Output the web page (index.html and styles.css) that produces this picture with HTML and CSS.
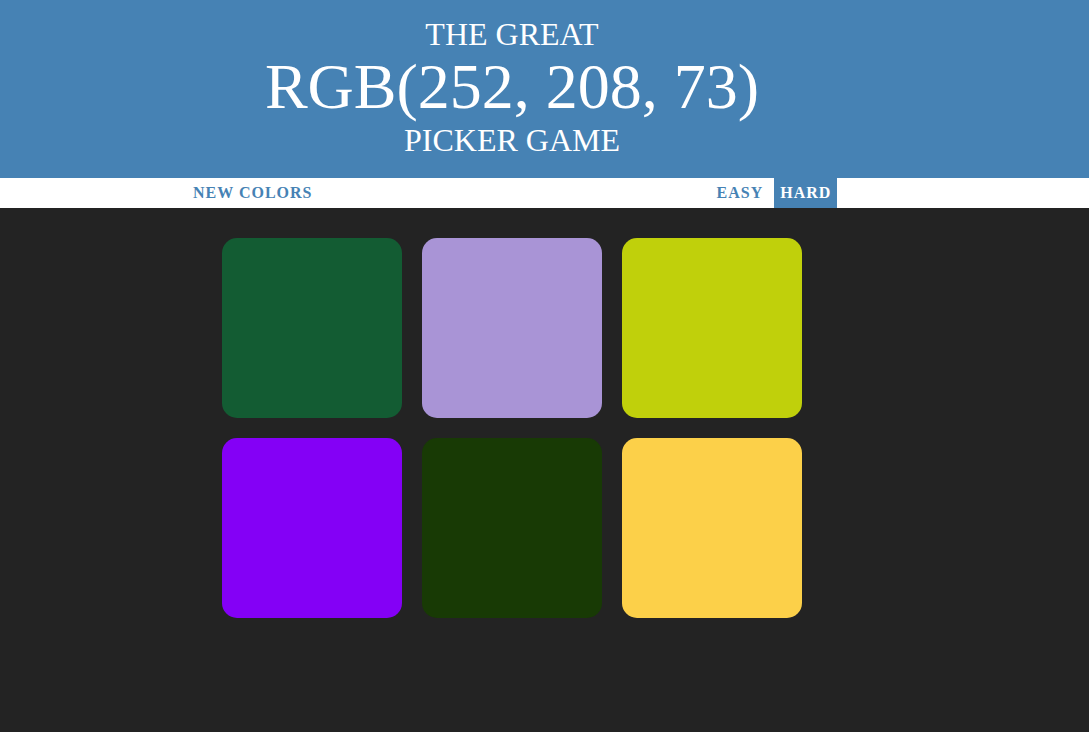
FILE: index.html
```html
<!DOCTYPE html>
<html>
<head>
<meta charset="utf-8">
<title>Color Game</title>
<link rel="stylesheet" href="styles.css">
</head>
<body>
<header class="header">
  <h1 class="title">
    THE GREAT
    <span class="rgb">RGB(252, 208, 73)</span>
    PICKER GAME
  </h1>
</header>
<nav class="stripe">
  <div class="stripe-inner">
    <button class="btn btn-new">NEW COLORS</button>
    <span class="message"></span>
    <button class="btn btn-easy">EASY</button>
    <button class="btn btn-hard selected">HARD</button>
  </div>
</nav>
<main class="container">
  <div class="square sq1"></div>
  <div class="square sq2"></div>
  <div class="square sq3"></div>
  <div class="square sq4"></div>
  <div class="square sq5"></div>
  <div class="square sq6"></div>
</main>
</body>
</html>
```
FILE: styles.css
```css
html, body {
  margin: 0;
  padding: 0;
}
body {
  background: #232323;
  font-family: "Liberation Serif", "Times New Roman", serif;
}
.header {
  background: steelblue;
}
.title {
  width: 1024px;
  margin: 0;
  padding: 17px 0 20px;
  box-sizing: border-box;
  text-align: center;
  color: #fff;
  font-weight: normal;
  font-size: 32px;
  line-height: 1.1;
  text-transform: uppercase;
}
.rgb {
  display: block;
  font-size: 200%;
}
.stripe {
  background: #fff;
  height: 30px;
}
.stripe-inner {
  width: 1024px;
  height: 30px;
  display: flex;
  align-items: stretch;
  padding-left: 187px;
  box-sizing: border-box;
}
.message {
  width: 392px;
}
.btn {
  border: none;
  background: none;
  margin: 0;
  padding: 0 6px;
  height: 30px;
  font-family: inherit;
  font-size: 16px;
  font-weight: 700;
  letter-spacing: 1px;
  line-height: 30px;
  text-transform: uppercase;
  color: steelblue;
  cursor: pointer;
}
.btn-hard {
  margin-left: 5px;
}
.btn.selected {
  background: steelblue;
  color: #fff;
}
.container {
  width: 600px;
  margin: 20px 0 0 212px;
  display: grid;
  grid-template-columns: repeat(3, 180px);
  gap: 20px;
  padding: 10px;
  box-sizing: border-box;
}
.square {
  width: 180px;
  height: 180px;
  border-radius: 15px;
}
.sq1 { background: #135c33; }
.sq2 { background: #a994d6; }
.sq3 { background: #c0d00b; }
.sq4 { background: #8400f6; }
.sq5 { background: #183a05; }
.sq6 { background: #fcd049; }
```
